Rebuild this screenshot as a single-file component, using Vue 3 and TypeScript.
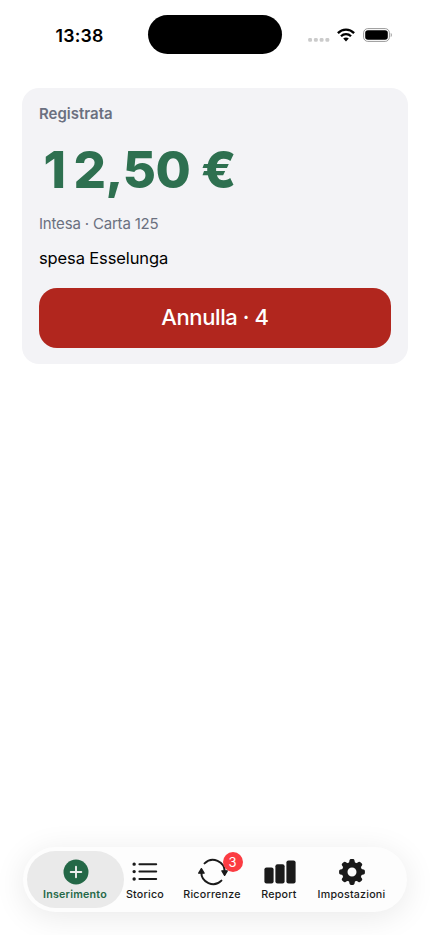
<script setup lang="ts">
import { ref } from 'vue'

interface Tab {
  id: string
  label: string
  badge?: number
}

const tabs: Tab[] = [
  { id: 'insert', label: 'Inserimento' },
  { id: 'history', label: 'Storico' },
  { id: 'recurring', label: 'Ricorrenze', badge: 3 },
  { id: 'report', label: 'Report' },
  { id: 'settings', label: 'Impostazioni' },
]
const active = ref('insert')
const seconds = ref(4)
const teeth = [0, 45, 90, 135, 180, 225, 270, 315]
</script>

<template>
  <div class="screen">
    <header class="status">
      <span class="time">13:38</span>
      <div class="island"></div>
      <div class="signals">
        <svg class="dots" width="22" height="14" viewBox="0 0 22 14">
          <rect v-for="i in 4" :key="i" :x="(i - 1) * 5.75 + 0.2" y="10" width="3.8" height="3.8" rx="1.3" fill="#cbcbcb" />
        </svg>
        <svg class="wifi" width="18" height="14" viewBox="0 0 18 14" fill="none" stroke="#000" stroke-width="2.3">
          <path d="M.9 5.1C5.4.5 12.6.5 17.1 5.1" />
          <path d="M4 8.3c2.8-2.8 7.2-2.8 10 0" />
          <path d="M9 13.5 6.2 10.6c1.6-1.5 4-1.5 5.6 0Z" fill="#000" stroke="none" />
        </svg>
        <svg class="battery" width="30" height="14" viewBox="0 0 30 14">
          <rect x=".6" y=".6" width="25.8" height="12.8" rx="4.2" fill="none" stroke="#999" />
          <rect x="2.2" y="2.2" width="22.6" height="9.6" rx="2.8" />
          <path d="M27.7 4.8c1.8.7 1.8 3.7 0 4.4Z" fill="#aaa" />
        </svg>
      </div>
    </header>

    <main class="content">
      <section class="card">
        <p class="state">Registrata</p>
        <p class="amount"><span class="one">1</span>2,50 <span class="euro">€</span></p>
        <p class="account">Intesa · Carta 125</p>
        <p class="note">spesa Esselunga</p>
        <button class="undo" type="button"><span>Annulla · {{ seconds }}</span></button>
      </section>
    </main>

    <nav class="tabbar">
      <button
        v-for="tab in tabs"
        :key="tab.id"
        type="button"
        class="tab"
        :class="[tab.id, { active: active === tab.id }]"
        @click="active = tab.id"
      >
        <span class="icon">
          <svg v-if="tab.id === 'insert'" width="26" height="26" viewBox="0 0 26 26">
            <circle cx="13" cy="13" r="12.5" fill="currentColor" />
            <path d="M13 7.7v10.6M7.7 13h10.6" stroke="#eee" stroke-width="1.9" stroke-linecap="round" />
          </svg>
          <svg v-else-if="tab.id === 'history'" width="26" height="20" viewBox="0 0 26 20" stroke="currentColor" stroke-width="2" stroke-linecap="round">
            <path d="M7.4 2.2h16.8M7.4 9.6h16.8M7.4 17h16.8" />
            <path d="M2.1 2.2h.1M2.1 9.6h.1M2.1 17h.1" stroke-width="3.3" />
          </svg>
          <svg v-else-if="tab.id === 'recurring'" width="30" height="28" viewBox="0 0 30 28" fill="none" stroke="currentColor" stroke-width="2" stroke-linecap="round">
            <path d="M6.6 5.4A11.8 11.8 0 0 1 26.7 14" />
            <path d="M23.4 22.6A11.8 11.8 0 0 1 3.3 14" />
            <path d="M23.9 12.8h5.4L26.6 17.4ZM.7 15.2h5.4L3.4 10.6Z" fill="currentColor" stroke-width="1.3" stroke-linejoin="round" />
          </svg>
          <svg v-else-if="tab.id === 'report'" width="32" height="24" viewBox="0 0 32 24" fill="currentColor">
            <rect x=".4" y="7.5" width="9.2" height="16" rx="2.1" />
            <rect x="11.4" y="4.2" width="9.2" height="19.3" rx="2.1" />
            <rect x="22.4" y=".5" width="9.2" height="23" rx="2.1" />
          </svg>
          <svg v-else width="28" height="28" viewBox="0 0 28 28">
            <circle cx="14" cy="14" r="7.3" fill="none" stroke="currentColor" stroke-width="5.6" />
            <path
              v-for="a in teeth"
              :key="a"
              d="M10.8 6 11.5 2.4Q11.8 1.1 13 1.1h2Q16.2 1.1 16.5 2.4L17.2 6Z"
              fill="currentColor"
              :transform="`rotate(${a} 14 14)`"
            />
          </svg>
          <span v-if="tab.badge" class="badge">{{ tab.badge }}</span>
        </span>
        <span class="label">{{ tab.label }}</span>
      </button>
    </nav>
  </div>
</template>

<style>
body {
  background: #fff;
}
</style>

<style scoped>
.screen {
  box-sizing: border-box;
  display: flex;
  flex-direction: column;
  width: 430px;
  height: 935px;
  padding-bottom: 23px;
  overflow: hidden;
  background: #fff;
  color: #000;
  font-family: Inter, "Liberation Sans", sans-serif;
}
.status {
  display: grid;
  grid-template-columns: 148px 134px 148px;
  align-items: center;
  height: 39px;
  padding-top: 15px;
}
.time {
  padding: 2px 0 0 55.5px;
  font-size: 17.7px;
  font-weight: 600;
  line-height: 20px;
  letter-spacing: 0.2px;
}
.island {
  height: 39px;
  border-radius: 20px;
  background: #000;
}
.signals {
  display: flex;
  align-items: center;
  padding-left: 26px;
}
.wifi {
  margin-left: 7px;
}
.battery {
  margin-left: 8px;
}
.content {
  flex: 1;
  padding: 34px 22px 0;
}
.card {
  box-sizing: border-box;
  height: 276px;
  padding: 16px 17px 17px;
  border-radius: 17px;
  background: #f3f3f6;
}
.card p {
  margin: 0;
  white-space: nowrap;
}
.state {
  color: #6b7080;
  font-size: 15px;
  font-weight: 600;
  line-height: 20px;
}
.card .amount {
  margin-top: 15px;
  color: #2e7050;
  font-size: 51px;
  font-weight: 800;
  line-height: 61px;
  letter-spacing: -0.5px;
}
.one {
  margin: 0 8px 0 4.5px;
}
.account {
  padding-top: 14px;
  color: #6b7080;
  font-size: 15px;
  line-height: 20px;
  letter-spacing: -0.18px;
}
.note {
  padding-top: 13px;
  font-size: 16.5px;
  line-height: 22px;
  letter-spacing: -0.12px;
}
.undo {
  display: block;
  width: 100%;
  height: 60px;
  margin-top: 19px;
  padding: 0 0 2px;
  border: 0;
  border-radius: 18px;
  background: #b1261e;
  color: #fff;
  font: 500 22px/28px Inter, "Liberation Sans", sans-serif;
  letter-spacing: -0.4px;
}
.tabbar {
  box-sizing: border-box;
  display: grid;
  grid-template-columns: 97px 42px 92px 42px 103px;
  height: 65px;
  margin: 0 23px;
  padding: 4px;
  border-radius: 33px;
  background: #fdfdfd;
  box-shadow: 0 5px 32px rgba(0, 0, 0, 0.09);
}
.tab {
  display: flex;
  flex-direction: column;
  align-items: center;
  height: 57px;
  padding: 7px 0 0;
  border: 0;
  border-radius: 29px;
  background: none;
  color: #1a1a1a;
  font-family: inherit;
}
.tab.active {
  background: #eaeaea;
  color: #246847;
}
.icon {
  position: relative;
  display: flex;
  align-items: center;
  justify-content: center;
  height: 28px;
}
.recurring .icon,
.report .icon {
  margin-left: 2px;
}
.label {
  margin-top: 2px;
  font-size: 10.7px;
  font-weight: 500;
  line-height: 14px;
  letter-spacing: 0.22px;
  white-space: nowrap;
}
.active .label {
  margin-right: 1px;
  font-weight: 600;
}
.badge {
  position: absolute;
  top: -6px;
  left: 24.5px;
  width: 20px;
  height: 20px;
  border-radius: 50%;
  background: #fb3c42;
  color: #fff;
  font-size: 13px;
  line-height: 20px;
  text-align: center;
}
</style>
